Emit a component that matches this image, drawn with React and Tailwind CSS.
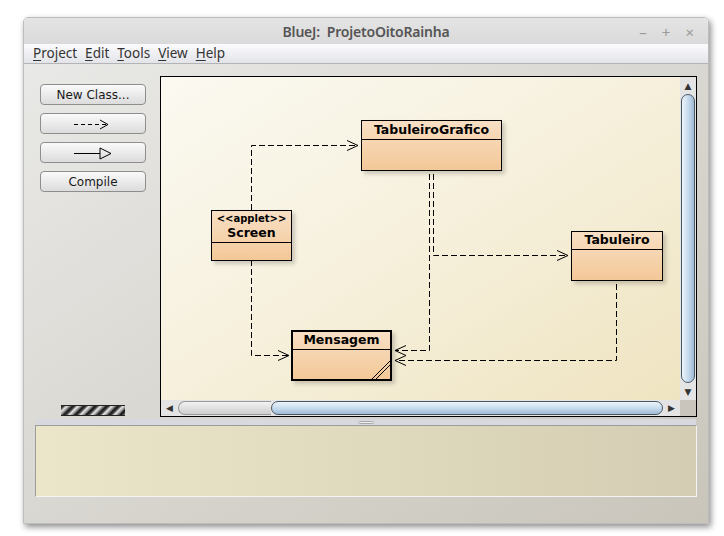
import React from "react";

const ui = { fontFamily: '"Noto Sans", "DejaVu Sans", sans-serif' };
const dj = { fontFamily: '"DejaVu Sans", "Liberation Sans", sans-serif' };

function Menu({ label }) {
  return (
    <span className="mr-[8px]">
      <span className="underline underline-offset-2">{label[0]}</span>
      {label.slice(1)}
    </span>
  );
}

function ToolButton({ children }) {
  return (
    <button
      style={dj}
      className="h-[21px] w-[106px] flex items-center justify-center rounded-[4px] border border-[#8e8e8e] bg-gradient-to-b from-[#fafafa] to-[#dcdcdc] text-[12px] text-[#1a1a1a]"
    >
      {children}
    </button>
  );
}

function ClassBox({ name, stereo, left, top, w, h, head, thick, lib }) {
  return (
    <div
      style={{ left, top, width: w, height: h }}
      className={`absolute flex flex-col bg-gradient-to-b from-[#f8dfc4] to-[#f3c898] shadow-[3px_3px_4px_rgba(0,0,0,0.18)] ${
        thick ? "border-2 border-black" : "border border-black"
      }`}
    >
      <div
        style={{ ...dj, height: head }}
        className="flex flex-col items-center justify-center border-b border-black leading-none text-black font-bold"
      >
        {stereo && <span className="text-[10px] mb-[3px]">{stereo}</span>}
        <span className="text-[12.5px]">{name}</span>
      </div>
      <div className="flex-1 relative">
        {lib && (
          <svg className="absolute right-0 bottom-0" width="22" height="22">
            <line x1="4" y1="22" x2="22" y2="4" stroke="black" strokeWidth="1" />
            <line x1="8" y1="22" x2="22" y2="8" stroke="black" strokeWidth="1" />
          </svg>
        )}
      </div>
    </div>
  );
}

function Head({ x, y, dir }) {
  const d = dir === "right" ? -1 : 1;
  return (
    <polyline
      points={`${x + d * 11},${y - 5} ${x},${y} ${x + d * 11},${y + 5}`}
      fill="none"
      stroke="black"
      strokeWidth="1"
    />
  );
}

function Diagram() {
  const dash = { fill: "none", stroke: "black", strokeWidth: 1, strokeDasharray: "6 3" };
  return (
    <div className="relative flex-1 bg-gradient-to-br from-[#fbf9f1] via-[#f6f0dc] to-[#efe4c1] overflow-hidden">
      <svg className="absolute inset-0" width="519" height="323">
        <polyline points="90.5,133 90.5,68.5 197,68.5" {...dash} />
        <Head x={197} y={68.5} dir="right" />
        <polyline points="90.5,183 90.5,278.5 128,278.5" {...dash} />
        <Head x={128} y={278.5} dir="right" />
        <polyline points="272.5,97 272.5,178.5 407,178.5" {...dash} />
        <Head x={407} y={178.5} dir="right" />
        <polyline points="268.5,97 268.5,273.5 234,273.5" {...dash} />
        <Head x={234} y={273.5} dir="left" />
        <polyline points="455.5,207 455.5,283.5 234,283.5" {...dash} />
        <Head x={234} y={283.5} dir="left" />
      </svg>
      <ClassBox name="TabuleiroGrafico" left={200} top={43} w={141} h={51} head={19} />
      <ClassBox name="Screen" stereo="<<applet>>" left={50} top={133} w={81} h={51} head={32} />
      <ClassBox name="Mensagem" left={130} top={253} w={101} h={51} head={18} thick lib />
      <ClassBox name="Tabuleiro" left={410} top={154} w={92} h={50} head={18} />
    </div>
  );
}

export default function App() {
  return (
    <div className="w-[724px] h-[536px] bg-white pt-[17px] pl-[23px]" style={ui}>
      <div className="w-[686px] h-[507px] flex flex-col rounded-t-[5px] overflow-hidden shadow-[2px_3px_6px_rgba(0,0,0,0.45)] border border-[#bdbdbd]">
        <div className="h-[26px] relative flex items-center justify-center bg-gradient-to-b from-[#e4e4e4] to-[#dadada]">
          <span className="text-[14px] font-semibold text-[#555] tracking-[-0.2px]">BlueJ:&nbsp; ProjetoOitoRainha</span>
          <div className="absolute right-[14px] top-[3px] flex gap-[15px] text-[15px] text-[#9a9a9a]">
            <span>–</span>
            <span>+</span>
            <span>×</span>
          </div>
        </div>
        <div className="h-[20px] flex items-center pl-[9px] text-[13.5px] text-[#333] bg-gradient-to-b from-[#fbfbfd] to-[#e3e4e9] border-b border-[#b4b4b4]">
          <Menu label="Project" />
          <Menu label="Edit" />
          <Menu label="Tools" />
          <Menu label="View" />
          <Menu label="Help" />
        </div>
        <div className="flex-1 flex flex-col bg-gradient-to-br from-[#e9e9e7] to-[#c9c5bb]">
          <div className="flex h-[355px]">
            <div className="w-[136px] flex flex-col pl-[16px] pt-[20px]">
              <div className="flex flex-col gap-[8px]">
                <ToolButton>New Class...</ToolButton>
                <ToolButton>
                  <svg width="40" height="12">
                    <line x1="1" y1="6.5" x2="34" y2="6.5" stroke="black" strokeDasharray="4 3" />
                    <polyline points="27,2 35,6.5 27,11" fill="none" stroke="black" />
                  </svg>
                </ToolButton>
                <ToolButton>
                  <svg width="40" height="14">
                    <line x1="1" y1="7.5" x2="27" y2="7.5" stroke="black" />
                    <polygon points="27,2 38,7.5 27,13" fill="none" stroke="black" />
                  </svg>
                </ToolButton>
                <ToolButton>Compile</ToolButton>
              </div>
              <div className="mt-auto mb-[3px] ml-[21px] w-[64px] h-[11px] border-y border-[#222] bg-[repeating-linear-gradient(135deg,#111_0px,#444_2px,#e8e8e8_4px,#9a9a9a_6px,#222_8px)]" />
            </div>
            <div className="mt-[12px] w-[537px] h-[341px] border border-black flex flex-col bg-[#e8e8e8]">
              <div className="flex flex-1">
                <Diagram />
                <div className="w-[16px] flex flex-col bg-[#e4e4e4]">
                  <div className="h-[17px] flex items-center justify-center text-[9px] text-[#333]">▲</div>
                  <div className="flex-1 mx-[1px] rounded-t-full rounded-b-full border border-[#4a5866] bg-gradient-to-r from-[#eef4fa] via-[#c8dcee] to-[#9fbbd5]" />
                  <div className="h-[17px] flex items-center justify-center text-[9px] text-[#333]">▼</div>
                </div>
              </div>
              <div className="h-[16px] flex bg-[#e4e4e4]">
                <div className="w-[17px] flex items-center justify-center text-[9px] text-[#333]">◀</div>
                <div className="flex-1 flex my-[1px]">
                  <div className="w-[93px] rounded-l-full border border-[#9a9a9a] border-r-0 bg-gradient-to-b from-[#f2f2f2] to-[#cfcfcf]" />
                  <div className="flex-1 rounded-full border border-[#4a5866] bg-gradient-to-b from-[#eef4fa] via-[#c8dcee] to-[#9fbbd5]" />
                </div>
                <div className="w-[17px] flex items-center justify-center text-[9px] text-[#333]">▶</div>
                <div className="w-[16px] bg-[#c9c5bc]" />
              </div>
            </div>
          </div>
          <div className="h-[6px] mx-[12px] flex justify-center items-center bg-[#d7d9de]">
            <div className="w-[16px] h-[3px] border border-[#a8a8a8] rounded-sm bg-[#f0f0f0]" />
          </div>
          <div className="mx-[11px] h-[72px] border border-[#9c9c9c] border-b-[#f4f4f4] border-r-[#f4f4f4] bg-gradient-to-r from-[#ebe6c9] to-[#d4cdb3]" />
        </div>
      </div>
    </div>
  );
}
